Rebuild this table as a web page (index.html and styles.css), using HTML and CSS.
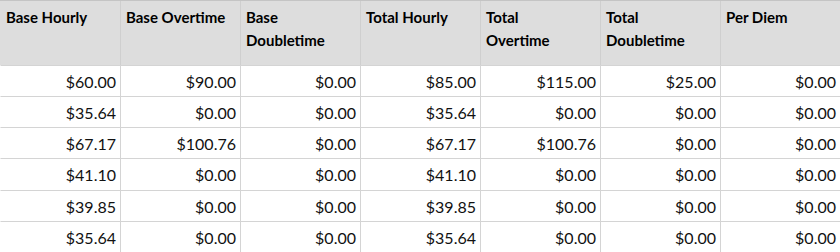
FILE: index.html
```html
<!DOCTYPE html>
<html lang="en">
<head>
    <meta charset="UTF-8">
    <title>Pay Rates</title>
    <link rel="stylesheet" href="styles.css">
</head>
<body>
    <div class="rates-grid">
        <div class="head-cell">Base Hourly</div>
        <div class="head-cell">Base Overtime</div>
        <div class="head-cell">Base Doubletime</div>
        <div class="head-cell">Total Hourly</div>
        <div class="head-cell">Total<br>Overtime</div>
        <div class="head-cell">Total Doubletime</div>
        <div class="head-cell">Per Diem</div>

        <div class="cell">$60.00</div><div class="cell">$90.00</div><div class="cell">$0.00</div><div class="cell">$85.00</div><div class="cell">$115.00</div><div class="cell">$25.00</div><div class="cell">$0.00</div>
        <div class="cell">$35.64</div><div class="cell">$0.00</div><div class="cell">$0.00</div><div class="cell">$35.64</div><div class="cell">$0.00</div><div class="cell">$0.00</div><div class="cell">$0.00</div>
        <div class="cell">$67.17</div><div class="cell">$100.76</div><div class="cell">$0.00</div><div class="cell">$67.17</div><div class="cell">$100.76</div><div class="cell">$0.00</div><div class="cell">$0.00</div>
        <div class="cell">$41.10</div><div class="cell">$0.00</div><div class="cell">$0.00</div><div class="cell">$41.10</div><div class="cell">$0.00</div><div class="cell">$0.00</div><div class="cell">$0.00</div>
        <div class="cell">$39.85</div><div class="cell">$0.00</div><div class="cell">$0.00</div><div class="cell">$39.85</div><div class="cell">$0.00</div><div class="cell">$0.00</div><div class="cell">$0.00</div>
        <div class="cell">$35.64</div><div class="cell">$0.00</div><div class="cell">$0.00</div><div class="cell">$35.64</div><div class="cell">$0.00</div><div class="cell">$0.00</div><div class="cell">$0.00</div>
    </div>
</body>
</html>
```

FILE: styles.css
```css
body {
    margin: 0;
    background-color: #ffffff;
    font-family: Lato, "Open Sans", sans-serif;
    color: #111111;
}

.rates-grid {
    display: grid;
    grid-template-columns: repeat(7, 120px);
    grid-template-rows: 64px 31px 31px 31px 32px 31px 32px;
    border-top: 1px solid #c4c4c4;
}

.head-cell {
    box-sizing: border-box;
    padding: 5px 4px 0 5px;
    background-color: #dddddd;
    border-left: 1px solid #cfcfcf;
    font-weight: bold;
    font-size: 15px;
    line-height: 23px;
    color: #000000;
}

.head-cell:first-child,
.cell:nth-child(7n + 1) {
    border-left-color: transparent;
}

.cell {
    box-sizing: border-box;
    border-left: 1px solid #d4d4d4;
    border-top: 1px solid #d4d4d4;
    padding: 0 4px 0 0;
    display: flex;
    align-items: center;
    justify-content: flex-end;
    font-size: 16px;
}
```
